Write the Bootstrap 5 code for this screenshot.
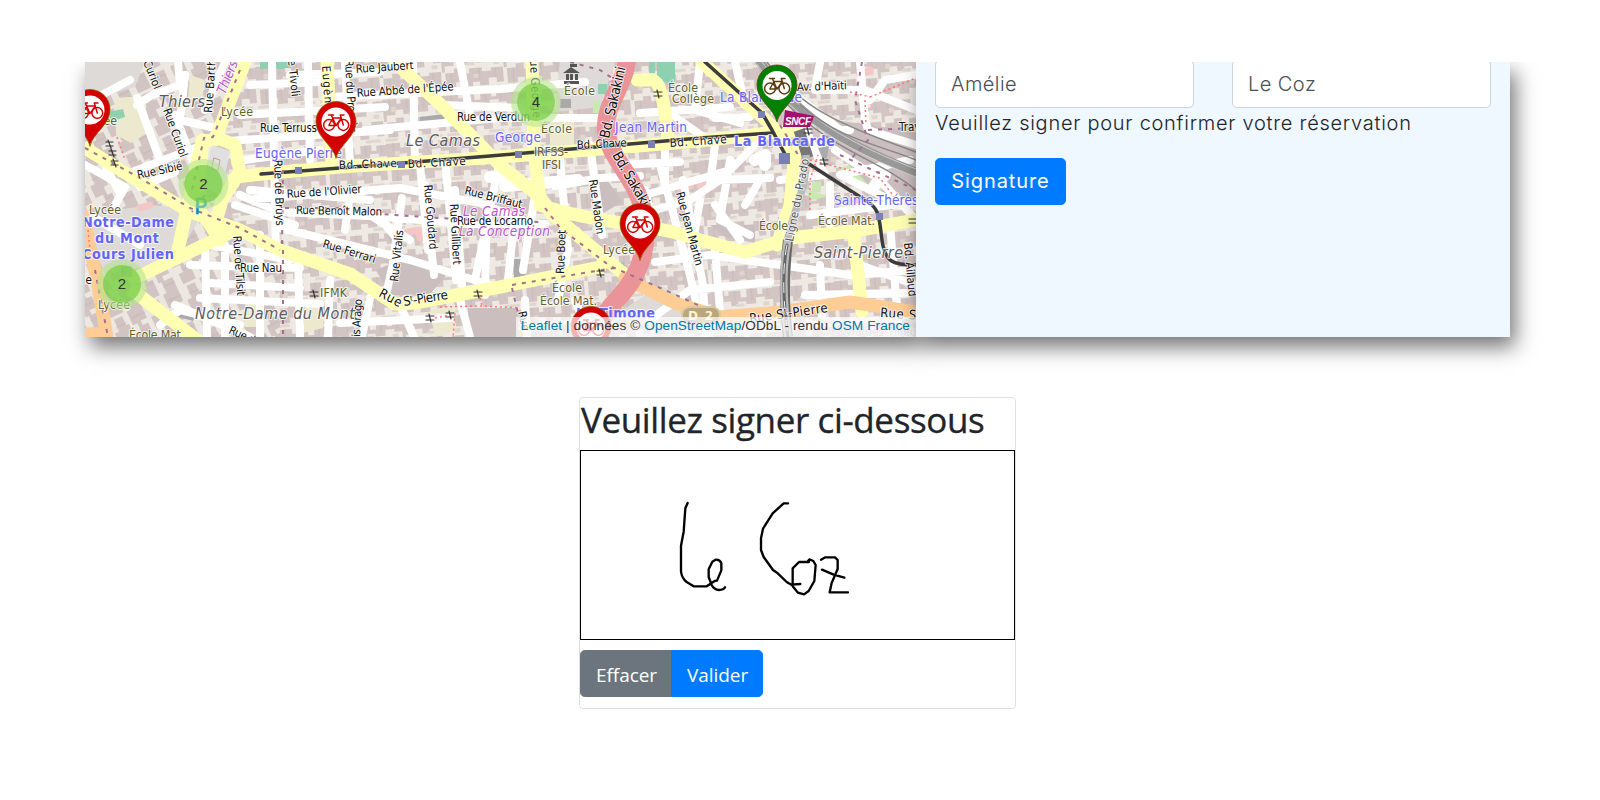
<!DOCTYPE html>
<html lang="fr">
<head>
<meta charset="utf-8">
<title>Réservation de vélo</title>
<meta name="viewport" content="width=device-width, initial-scale=1">
<link href="https://cdn.jsdelivr.net/npm/bootstrap@5.3.0/dist/css/bootstrap.min.css" rel="stylesheet">
<script src="https://cdn.jsdelivr.net/npm/bootstrap@5.3.0/dist/js/bootstrap.bundle.min.js" defer></script>
<style>
body{font-family:"Open Sans","Noto Sans",sans-serif;font-size:20px;background:#fff;overflow:hidden}
.topbar{height:62px}
.booking-clip{height:320px;overflow:hidden;padding:0 90px 0 85px}
.panel{height:275px;position:relative;box-shadow:5px 10px 20px rgba(0,0,0,.55)}
.panel-map{width:831px;flex:none}
.panel-form{background:#eff7ff;font-family:Inter,sans-serif;padding:0 19px;font-weight:300}
.panel-form .row{--bs-gutter-x:38px;margin-top:-2px}
.panel-form .form-control{height:48px;font-size:20px;font-weight:300;padding:.375rem 15px;border-color:#ced4da;border-radius:4.8px;color:#495057;letter-spacing:.45px}
.confirm-line{line-height:30px;color:#212529;white-space:nowrap;letter-spacing:.73px}
.btn-primary{--bs-btn-bg:#007bff;--bs-btn-border-color:#007bff}
.btn-lg{--bs-btn-border-radius:4.8px;height:47px;padding:0 15px}
.panel-form .btn{width:131px;margin-top:20px;padding:0 0 2px;font-weight:400;font-size:20px;letter-spacing:.9px}
.attribution{position:absolute;right:0;bottom:0;height:20px;padding:0 6px 0 5px;background:rgba(255,255,255,.7);font:13.6px/18px "Liberation Sans",sans-serif;letter-spacing:.09px;color:#333;white-space:nowrap}
.attribution a{color:#0078a8;text-decoration:none}
.sign-card{width:437px;height:312px;margin:15px auto 0 579px;border:1px solid #dfdfdf;border-radius:4px}
.sign-title{font-size:35px;line-height:42px;font-weight:500;color:#212529;margin:1px 0 9px;padding-left:1px;white-space:nowrap;letter-spacing:-.38px;-webkit-text-stroke:.35px #212529}
.sign-pad{height:190px;border:1px solid #000;margin-bottom:10px}
.sign-card .btn{width:92px;font-size:19px;padding-top:3px;letter-spacing:-.05px}
.street,.area,.spot,.stop,.quarter{paint-order:stroke;stroke:#fff;stroke-opacity:.75;stroke-width:2px;font-family:"DejaVu Sans Condensed","DejaVu Sans",sans-serif;font-stretch:condensed}
.street{font-size:11.5px;fill:#111}
.area{font-size:16px;font-style:italic;fill:#5c5c5c}
.spot{font-size:12.300px;fill:#62622a}
.stop{font-size:13.500px;fill:#6464f8}
.stopb{font-weight:bold;font-size:14.300px}
.quarter{font-size:13.500px;font-style:italic;fill:#b858c8}
.cluster-no{font:15px "Liberation Sans",sans-serif;fill:#333;text-anchor:middle}
</style>
</head>
<body>
<header class="topbar bg-white"></header>
<main>
<section class="booking-clip d-flex">
  <div class="panel panel-map">
  <svg class="d-block" width="831" height="275" viewBox="85 62 831 275" fill="none" stroke-linecap="round" stroke-linejoin="round">
    <defs>
      <pattern id="blocks" width="62" height="44" patternUnits="userSpaceOnUse" patternTransform="rotate(-5)">
        <rect width="62" height="44" fill="#eee9e3"/>
        <path fill="#d3c5c3" d="M0 1h14v5h4V2h12v7h6V1h11v6h5V2h10v11h-8v-3h-9v6H35v-3h-8v4h-7v-5h-8v5H3v6H0zM3 24h9v-4h8v6h7v-5h13v4h9v-3h12v15h-7v-5h-8v7h-9v-4h-7v5H20v-6h-7v5H3z"/>
        <path fill="#dfd7ce" d="M8 9h5v5H8zM25 15h8v3h-8zM52 15h6v4h-6zM0 40h12v3H0zM31 27h5v4h-5zM42 40h15v3H42z"/>
        <path stroke="#bcadab" stroke-width=".5" d="M7 1v8M24 2v9M41 1v11M57 2v8M9 25v14M24 25v11M37 22v11M53 23v9"/>
      </pattern>
      <pattern id="blocksLeft" width="48" height="40" patternUnits="userSpaceOnUse" patternTransform="rotate(65)">
        <rect width="48" height="40" fill="#ece7e0"/>
        <path fill="#d1c4c2" d="M0 1h14v7h5V2h12v8h5V1h12v12H36v3H24v-4h-9v5H0zM2 23h10v-3h9v5h9v-5h17v14H36v-5h-8v8H15v-5H2z"/>
        <path stroke="#b9abaa" stroke-width=".5" d="M8 1v14M25 3v12M41 1v12M10 22v11M33 21v8"/>
      </pattern>
      <g id="bike" stroke-width="1.5">
        <circle cx="-7" cy="3" r="5.4"/><circle cx="7.3" cy="3" r="5.4"/>
        <path d="M-7 3-3-4H5.500L0 3.500H-7M0 3.500-4.500-6.500M7.300 3 4.300-7H8M-7.500-7h5"/>
      </g>
      <path id="pin" d="M0 0C-3-13-20-21-20-36.500A20 20 0 0 1 20-36.500C20-21 3-13 0 0Z"/>
    </defs>
    <rect x="85" y="62" width="831" height="275" fill="url(#blocks)"/>
    <path fill="url(#blocksLeft)" d="M85 62H245L200 195 280 250V337H85Z"/>
    <!-- landmark plots -->
    <path fill="#dedad8" d="M85 62h60l-10 25-50 15zM150 205l55 5-30 50-70 15-20-60zM560 62h55l-15 45-45 5zM660 285l45 25-50 20-40-15z"/>
    <path fill="#ece9cf" d="M115 98l28-2 8 35-20 12-15-8zM245 299h12v28h-12zM190 75l15 5-3 22-14-3zM305 300l18-2v30l-20 5zM430 310l25-5v25l-20 7zM550 115l24-2v35l-24 3z"/>
    <path fill="#8fd0b0" d="M657 62h18v24l-18-6zM598 84h9v10h-9zM260 62h24v7h-24zM108 112l15-3 2 8-15 5zM275 62h16v6h-16zM612 265l12-3v10l-10 1zM649 62h6v11h-6z"/>
    <path fill="#c8eab0" d="M838 170l12-6 20 14-6 8zM812 183l9-2v9l-9 1zM593 101h7v12h-7zM805 190l25 6-18 4z"/>
    <path fill="#cbbebe" d="M376 270l30-13 40 18-15 18-40 3zM468 308h50v29h-50zM835 120l81 12v70l-50-20-40-40zM590 175l12-3 20 30-20 12zM710 225h45v18l-30-6z"/>
    <path fill="#aaa" d="M514 259h11v19h-11zM809 150l20-4-2 12-12 2zM420 117l24-3v8l-24 1zM560 99h11v9h-11zM175 308l22 4-4 9-22-6z"/>
    <g stroke="#f3c7c5" stroke-width="7"><path d="M680 188 690 186M700 186 706 183M715 178l-3 9M860 75l10-5M878 188l5-9M408 232l11-2 1 8M140 208l10-3"/></g>
    <!-- minor streets -->
    <g stroke="#fff" stroke-width="8">
      <path d="M85 104 130 80M137 105 152 95 180 85 178 62M137 98 158 155M132 172 195 148M185 75 180 120 215 128M175 115 202 185M140 187 175 172M85 165 125 187 115 205M100 155 118 190M90 215 140 245M250 85 320 82M240 115 385 107M228 141 390 130M245 160 320 150M225 62 205 110"/>
      <path d="M272 62 276 255M308 62 310 160M345 62 350 165M290 75 380 72M330 97 500 89 585 82M365 130 500 118 603 118M413 62 415 165M460 62 470 115M443 105 520 108 530 115"/>
      <path d="M255 199 400 188 480 203 535 225M240 195 280 212 370 216 470 224 545 224M250 190 370 200M235 205 295 225M280 228 410 260 500 288M350 195 345 230M370 215 410 240M420 165 428 250M445 160 456 280M500 160 475 280M377 215 398 240 385 300M402 198 392 270M425 185 434 275M455 190 462 285M487 205 485 295M515 215 508 280M560 160 568 250 558 300M535 195 523 270M590 145 602 235M555 186 600 178 640 176"/>
      <path d="M210 245 290 260M190 265 300 268M200 298 320 304M210 283 300 288M205 245 207 337M225 245 225 337M260 235 260 337M298 255 300 337M175 305 250 337M330 280 328 337M370 298 362 337M400 305 414 337M340 323 450 318M160 325 180 310 240 325"/>
      <path d="M665 102 665 190M640 113 730 107M675 117 715 145 710 185M700 62 695 110 740 123M735 62 745 105M715 118 750 117M620 165 680 162M635 198 730 170 760 140M655 210 690 200 720 180 770 178M700 200 690 260M660 165 690 275 700 320M683 180 703 285 706 335M715 205 740 240M730 160 720 220 750 235M655 262 710 255 780 265 850 275 916 270M650 320 690 290 770 282M820 62 815 90 865 90M860 62 865 120 868 130 916 145M870 100 885 80 916 75M865 90 916 110M795 95 840 130 850 130M800 115 825 175 780 180M835 150 880 180 916 220M810 215 916 202M830 185 830 225M860 265 916 285M820 265 822 315M890 225 898 320M805 295 905 293M910 160 840 175 900 205M745 205 760 180M715 250 720 310M645 190 655 230M575 300 590 337M525 300 527 337M460 300 470 337"/>
    </g>
    <g stroke="#fff" stroke-width="12"><path d="M505 186 578 180M755 160 765 155 765 165M490 177 505 175M875 185 885 175"/></g>
    <!-- railway -->
    <g stroke="#999" stroke-width="9"><path d="M760 62C790 105 820 135 916 172"/></g>
    <g stroke="#d5cfcf" stroke-width="1"><path d="M762 62C792 103 822 133 916 169M757 64C786 108 822 141 916 177"/></g>
    <g stroke="#888" stroke-width="1.500"><path d="M767 62C800 108 840 125 916 152M800 105C840 140 880 145 916 160M785 102C830 150 880 160 916 190M796 115 806 150"/></g>
    <!-- main roads -->
    <g stroke="#ffffb3" stroke-width="13">
      <path d="M327 62 332 165M245 62 215 140 202 141 178 250M203 140 198 190M215 137 235 145 240 172 222 200 215 225M235 177 282 172 340 167 500 157 700 141 795 130M395 62 440 104 500 165 540 197 552 214 600 254 625 275M532 62 534 150 540 200M540 205C600 225 650 222 700 240L745 252 790 238 855 231 916 220M854 235 862 312M637 80 652 80C662 82 664 105 668 135M702 62 768 122 795 152 790 205 777 245"/>
      <path d="M85 148 140 182 190 212 240 230 280 250 350 274 395 304 415 303 500 287 600 267M190 195 220 240M236 230 135 278M135 292 197 340"/>
    </g>
    <path fill="#e0e0e0" d="M212 145l18 6-9 44-18-8z"/>
    <path stroke="#c99" d="M214 158l6 2-2 11-6-2z"/>
    <g stroke="#fdcd95" stroke-width="13"><path d="M83 215 96 275 107 337M85 334H100M625 278 675 303 720 317 780 312 850 302 916 312"/></g>
    <path stroke="#ea9398" stroke-width="18" d="M627 60C625 85 604 105 606 130S632 175 640 200 648 250 635 275 610 300 600 325"/>
    <!-- tram and metro lines -->
    <path stroke="#777" stroke-width="11" stroke-linecap="butt" d="M799 130 808 158"/>
    <path stroke="#666" stroke-width="10" stroke-linecap="butt" d="M788 240C785 265 783 300 788 337"/>
    <path stroke="#bbb" stroke-width="7.500" stroke-linecap="butt" d="M806 155C808 190 789 220 787 245 782 270 783 300 788 337"/>
    <path stroke="#666" stroke-width="3" d="M787 245C782 270 783 300 788 337"/>
    <path stroke="#eee" stroke-dasharray="10 9" d="M787 245C782 270 783 300 788 337"/>
    <path stroke="#3c3c3c" stroke-width="3.500" d="M261 174 340 168 490 156 560 150 700 138 772 133M705 62 762 113 772 130 787 158M809 164 865 200C880 208 879 218 882 240S892 265 916 265"/>
    <g fill="#7a80b5"><path d="M295 167h7v7h-7zM398 161h7v7h-7zM515 151h7v7h-7zM648 141h7v7h-7zM758 111h7v7h-7zM779 153h11v11h-11zM876 213h7v7h-7z"/><path fill="#659" opacity=".35" d="M121 266h11v11h-11z"/></g>
    <!-- foot and cycle paths -->
    <g stroke="#a4708f" stroke-width="2" stroke-dasharray="4 6" stroke-linecap="butt"><path d="M85 148 140 178 190 208 240 228 280 250M240 70 213 137 204 138 192 190M283 250V337M283 170 282 250M285 208 340 208 380 214 470 220 540 222M545 208 560 228 610 266 665 290 700 306M512 285 620 267M570 62 600 70 615 80M95 270 108 337M862 62 855 100 868 140 850 160M868 130 916 128M840 155 916 190M780 125 800 158M512 288 522 330M205 195 192 212"/></g>
    <g stroke="#f77" stroke-width="1.500" stroke-dasharray="2 3" stroke-linecap="butt"><path d="M870 97 916 78M865 100 866 125M810 160 880 178 900 205M810 210 810 180 818 155M440 307 480 306 520 308M435 318 455 314 453 337M117 137 125 160M480 298 482 306M88 230 90 250M850 92 870 97"/></g>
    <!-- gates -->
    <g stroke="#333" stroke-width="1.200"><path d="M106 142h7m-7 4h7m-5-6 3 8M109 151h7m-7 4h7m-5-6 3 8M111 161h7m-7 4h7m-5-6 3 8M310 292h8m-8 4h8m-5-6 2 8M474 292h8m-8 4h8m-5-6 2 8M426 316h8m-8 4h8m-5-6 2 8M446 313h8m-8 4h8m-5-6 2 8M597 271h7m-7 4h7m-5-6 2 8M654 92h8m-8 4h8m-5-6 2 8M804 129h8m-8 4h8m-5-6 2 8M820 160h8m-8 4h8m-5-6 2 8M909 219h7m-7 4h7"/></g>
    <path fill="#555" d="M564 81h15v3h-15zM566 74h3v6h-3zM570 74h3v6h-3zM575 74h3v6h-3zM563 73l8-6 9 6zM570 64h7v3h-7z"/>
    <!-- labels -->
    <g class="street">
      <text transform="translate(143 62)rotate(68)" textLength="30">Curiol</text>
      <text transform="translate(163 110)rotate(70)" textLength="51">Rue Curiol</text>
      <text transform="translate(212 113)rotate(-86)" textLength="60">Rue Barthe</text>
      <text transform="translate(138 179)rotate(-12)" textLength="46">Rue Sibié</text>
      <text x="260" y="132" textLength="57">Rue Terruss</text>
      <text transform="translate(288 60)rotate(84)" textLength="37">e Tivoli</text>
      <text transform="translate(322 66)rotate(86)" textLength="45">Eugène</text>
      <text transform="translate(345 60)rotate(87)" textLength="73">Rue du Progrès</text>
      <text transform="translate(356 73)rotate(-4)" textLength="58">Rue Jaubert</text>
      <text transform="translate(357 97)rotate(-4)" textLength="97">Rue Abbé de l'Épée</text>
      <text x="457" y="121" textLength="73">Rue de Verdun</text>
      <text transform="translate(339 169)rotate(-2)" textLength="58">Bd. Chave</text>
      <text transform="translate(408 168)rotate(-3)" textLength="58">Bd. Chave</text>
      <text transform="translate(577 149)rotate(-3)" textLength="50">Bd. Chave</text>
      <text transform="translate(670 147)rotate(-4)" textLength="57">Bd. Chave</text>
      <text transform="translate(274 160)rotate(88)" textLength="66">Rue de Bruys</text>
      <text transform="translate(287 198)rotate(-4)" textLength="75">Rue de l'Olivier</text>
      <text transform="translate(296 214)rotate(1)" textLength="86">Rue Benoît Malon</text>
      <text transform="translate(322 247)rotate(17)" textLength="55">Rue Ferrari</text>
      <text transform="translate(398 282)rotate(-84)" textLength="52">Rue Vitalis</text>
      <text transform="translate(424 185)rotate(85)" textLength="65">Rue Goudard</text>
      <text transform="translate(450 204)rotate(87)" textLength="61">Rue Gillibert</text>
      <text transform="translate(464 194)rotate(14)" textLength="59">Rue Briffaut</text>
      <text x="457" y="225" textLength="76">Rue de Locarno</text>
      <text transform="translate(564 274)rotate(-88)" textLength="44">Rue Boet</text>
      <text transform="translate(589 180)rotate(82)" textLength="55">Rue Madon</text>
      <text transform="translate(676 193)rotate(75)" textLength="76">Rue Jean Martin</text>
      <text transform="translate(233 236)rotate(86)" textLength="60">Rue de Tilsit</text>
      <text x="240" y="272" textLength="42">Rue Nau</text>
      <text transform="translate(378 296)rotate(28)" font-size="13" textLength="24">Rue</text>
      <text transform="translate(404 306)rotate(-9)" font-size="13" textLength="45">Sᵗ-Pierre</text>
      <text transform="translate(360 337)rotate(-87)" textLength="38">is Arago</text>
      <text transform="translate(228 333)rotate(24)" textLength="36">Rue d'It</text>
      <text transform="translate(530 60)rotate(87)" textLength="58">ue George</text>
      <text transform="translate(609 139)rotate(-77)" font-size="14" textLength="73">Bd. Sakakini</text>
      <text transform="translate(612 155)rotate(60)" font-size="14" textLength="60">Bd. Sakaki</text>
      <text transform="translate(797 91)rotate(-2)" textLength="50">Av. d'Haïti</text>
      <text x="899" y="131">Trav</text>
      <text transform="translate(793 242)rotate(-79)" fill="#555" textLength="84">Ligne du Prado</text>
      <text transform="translate(904 243)rotate(85)" textLength="54">Bd. Aillaud</text>
      <text transform="translate(750 323)rotate(-8)" font-size="13" textLength="79">Rue Sᵗ-Pierre</text>
      <text transform="translate(880 317)rotate(4)" font-size="13" textLength="36">Rue S</text>
      <text transform="translate(518 312)rotate(78)">Rue</text>
      <text x="79" y="284">de</text>
      <text x="845" y="336" textLength="80" fill="#999" opacity=".6">Via des Tilleuls</text>
    </g>
    <g class="area"><text x="159" y="107" textLength="46">Thiers</text><text x="406" y="146" textLength="74">Le Camas</text><text x="195" y="319" textLength="160">Notre-Dame du Mont</text><text x="814" y="258" textLength="89">Saint-Pierre</text></g>
    <g class="spot"><text x="221" y="116" textLength="32">Lycée</text><text x="86" y="125" textLength="31">Lycée</text><text x="89" y="214" textLength="32">Lycée</text><text x="98" y="309" textLength="32">Lycée</text><text x="129" y="339" textLength="55">École Mat.</text><text x="320" y="297" textLength="27">IFMK</text><text x="564" y="95" textLength="31">École</text><text x="541" y="133" textLength="31">École</text><text x="534" y="156" textLength="34">IRFSS-</text><text x="542" y="169" textLength="19">IFSI</text><text x="668" y="92" textLength="30">École</text><text x="672" y="103" textLength="42">Collège</text><text x="603" y="254" textLength="32">Lycée</text><text x="552" y="292" textLength="30">École</text><text x="540" y="305" textLength="57">École Mat.</text><text x="759" y="230" textLength="29">École</text><text x="818" y="225" textLength="57">École Mat.</text></g>
    <g class="stop"><text x="255" y="158" textLength="87">Eugène Pierre</text><text x="495" y="142" textLength="46">George</text><text x="615" y="132" textLength="72">Jean Martin</text><text x="720" y="102" textLength="82">La Blancarde</text><text x="834" y="205" textLength="92">Sainte-Thérèse</text>
      <g class="stopb"><text x="734" y="146" textLength="101">La Blancarde</text><text x="82" y="227" textLength="92">Notre-Dame</text><text x="95" y="243" textLength="64">du Mont</text><text x="82" y="259" textLength="92">Cours Julien</text><text x="576" y="318" textLength="79">La Timone</text></g></g>
    <g class="quarter"><text transform="translate(225 95)rotate(-68)" textLength="35">Thiers</text><text x="463" y="216" textLength="62">Le Camas</text><text x="459" y="236" textLength="91">La Conception</text></g>
    <text x="194" y="214" font-family="DejaVu Sans" font-size="22" fill="#0090c0" stroke="#0090c0" stroke-width=".5">P</text>
    <rect x="682" y="307" width="38" height="17" rx="8" fill="#baa57c" stroke="#d8c9a0" stroke-width="2"/><text x="688" y="320" font-family="DejaVu Sans" font-size="12" font-weight="bold" fill="#fff3d0" textLength="25">D 2</text>
    <path fill="#a5106f" d="M785 110 814 116 810 127 783 127Z"/><text x="785" y="125" font-family="Liberation Sans" font-weight="bold" font-style="italic" font-size="10" fill="#fff" textLength="26">SNCF</text>
    <!-- clusters -->
    <g fill="#b5e28c" fill-opacity=".6"><circle cx="203.500" cy="184" r="25"/><circle cx="122" cy="284" r="25"/><circle cx="536" cy="102" r="25"/></g>
    <g fill="#6ecc39" fill-opacity=".65"><circle cx="203.500" cy="184" r="19"/><circle cx="122" cy="284" r="19"/><circle cx="536" cy="102" r="19"/></g>
    <g class="cluster-no"><text x="203.500" y="189">2</text><text x="122" y="289">2</text><text x="536" y="107">4</text></g>
    <!-- stations -->
    <g stroke="#d40000">
      <g transform="translate(90 146)"><use href="#pin" fill="#d40000" stroke="#8a5a00" stroke-width=".8"/><circle cy="-36" r="14.500" fill="#fff" stroke="none"/><use href="#bike" y="-36"/></g>
      <g transform="translate(336 158)"><use href="#pin" fill="#d40000" stroke="#8a5a00" stroke-width=".8"/><circle cy="-36" r="14.500" fill="#fff" stroke="none"/><use href="#bike" y="-36"/></g>
      <g transform="translate(640 260)"><use href="#pin" fill="#d40000" stroke="#8a5a00" stroke-width=".8"/><circle cy="-36" r="14.500" fill="#fff" stroke="none"/><use href="#bike" y="-36"/></g>
      <g transform="translate(591 363)"><use href="#pin" fill="#d40000" stroke="#8a5a00" stroke-width=".8"/><circle cy="-36" r="14.500" fill="#fff" stroke="none"/><use href="#bike" y="-36"/></g>
      <g transform="translate(777 121.500)" stroke="#5a3c0a"><use href="#pin" fill="#008000" stroke-width=".8"/><circle cy="-36" r="14.500" fill="#fff" stroke="none"/><use href="#bike" y="-36"/></g>
    </g>
  </svg>
  <div class="attribution"><a href="#">Leaflet</a> | données © <a href="#">OpenStreetMap</a>/ODbL - rendu <a href="#">OSM France</a></div>
  </div>
  <form class="panel panel-form flex-grow-1">
    <div class="row">
      <div class="col"><input class="form-control" type="text" value="Amélie" aria-label="Prénom"></div>
      <div class="col"><input class="form-control" type="text" value="Le Coz" aria-label="Nom"></div>
    </div>
    <div class="confirm-line"><span>Veuillez signer pour confirmer votre réservation</span></div>
    <button class="btn btn-primary btn-lg" type="button">Signature</button>
  </form>
</section>
<section class="sign-card">
  <h2 class="sign-title">Veuillez signer ci-dessous</h2>
  <div class="sign-pad">
    <svg class="d-block" width="433" height="188" viewBox="33 198 1299 564" fill="none" stroke="#000" stroke-width="7" stroke-linecap="round" stroke-linejoin="round">
      <path d="M353 354 346 370 341 440 333 482V560Q336 581 350 591L371 604H410L434 588 441 587 454 556V534Q449 523 437 524L427 530 416 553V576L425 600Q432 614 447 615 461 615 465 607M654 355H641L608 385 579 431 573 460V495L581 516 609 555 621 563 650 591 664 599 691 597M717 531H687L668 550V604L684 623 702 628 716 618 733 588 737 540 730 528 718 523 712 531M753 524 766 517H795L803 525V552L785 594 779 622H834M756 554 791 569 823 578"/>
    </svg>
  </div>
  <div class="btn-group">
    <button class="btn btn-secondary btn-lg" type="button">Effacer</button>
    <button class="btn btn-primary btn-lg" type="button">Valider</button>
  </div>
</section>
</main>
</body>
</html>
